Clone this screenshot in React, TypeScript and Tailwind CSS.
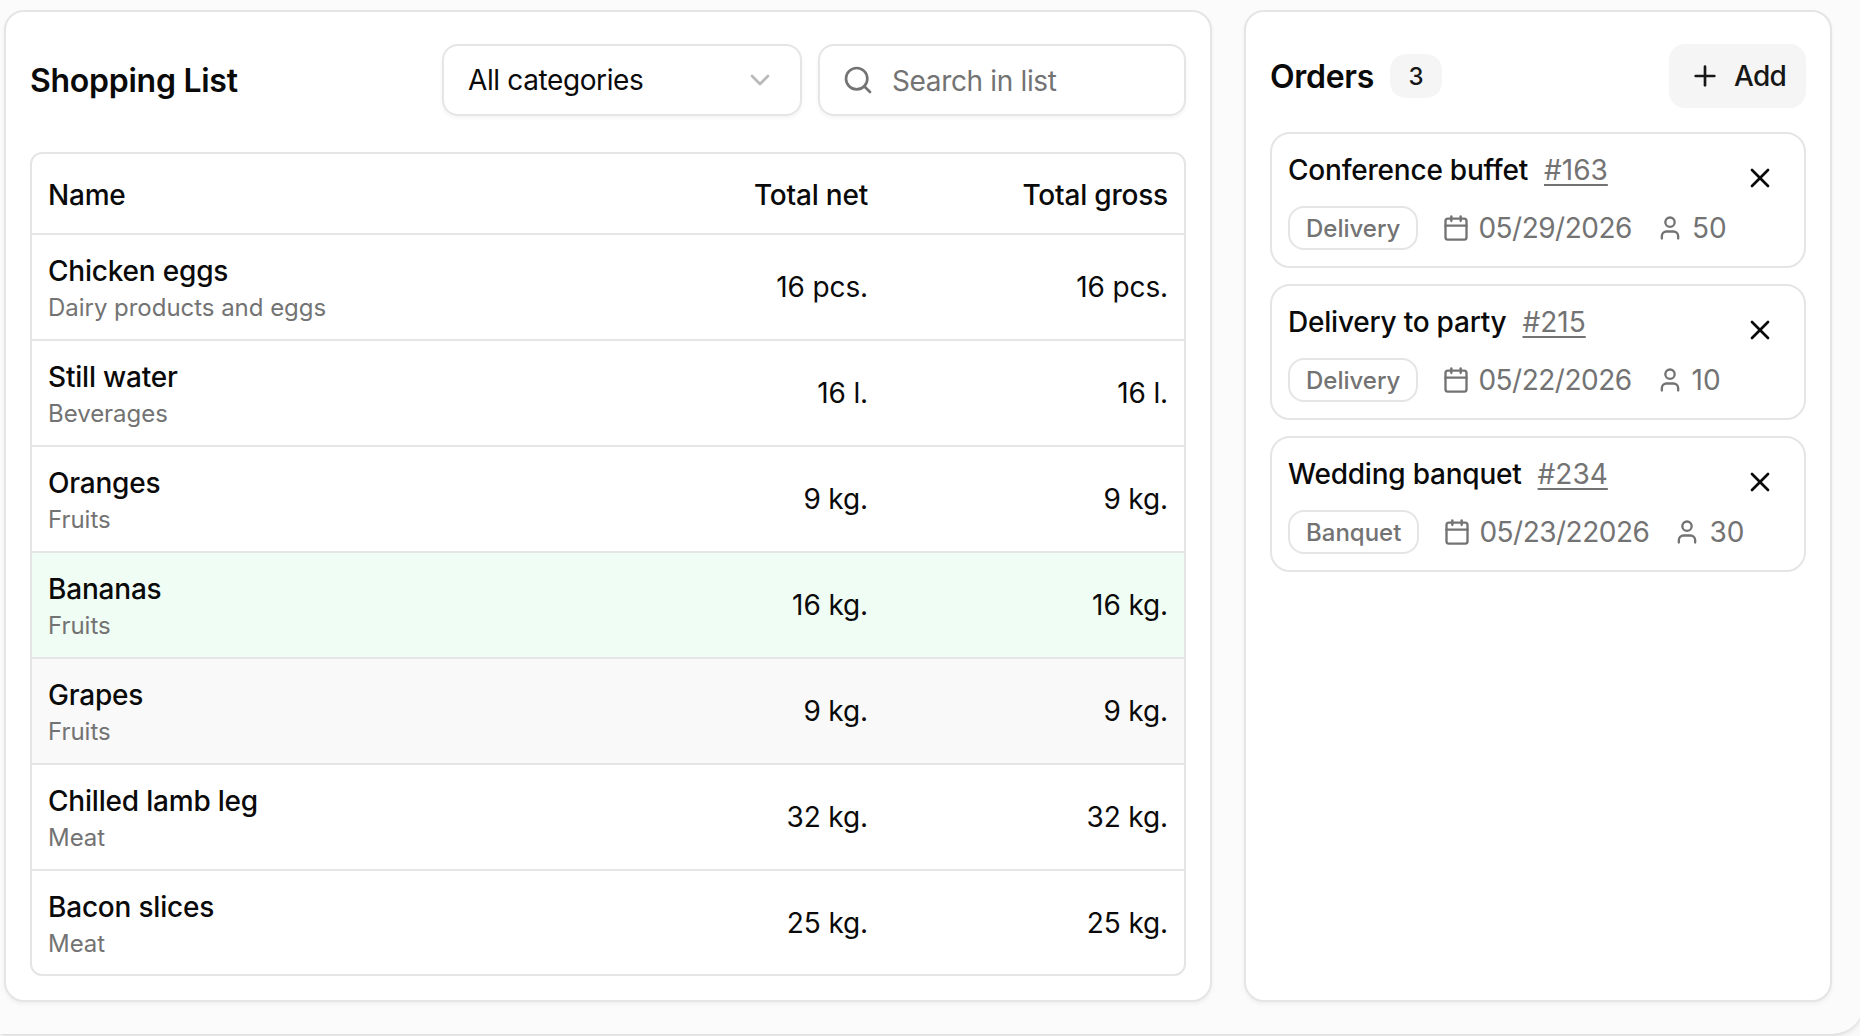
import { Calendar, ChevronDown, Plus, Search, User, X } from "lucide-react";

const products = [
  { name: "Chicken eggs", category: "Dairy products and eggs", net: "16 pcs.", gross: "16 pcs." },
  { name: "Still water", category: "Beverages", net: "16 l.", gross: "16 l." },
  { name: "Oranges", category: "Fruits", net: "9 kg.", gross: "9 kg." },
  { name: "Bananas", category: "Fruits", net: "16 kg.", gross: "16 kg.", className: "bg-[#f0fdf4]" },
  { name: "Grapes", category: "Fruits", net: "9 kg.", gross: "9 kg.", className: "bg-[#f9f9f9]" },
  { name: "Chilled lamb leg", category: "Meat", net: "32 kg.", gross: "32 kg." },
  { name: "Bacon slices", category: "Meat", net: "25 kg.", gross: "25 kg." },
];

const orders = [
  { title: "Conference buffet", id: "#163", type: "Delivery", date: "05/29/2026", guests: 50 },
  { title: "Delivery to party", id: "#215", type: "Delivery", date: "05/22/2026", guests: 10 },
  { title: "Wedding banquet", id: "#234", type: "Banquet", date: "05/23/22026", guests: 30 },
];

function ShoppingList() {
  return (
    <section className="flex h-[992px] w-[1208px] shrink-0 flex-col rounded-[20px] border-2 border-[#e5e5e5] bg-white px-6 pt-8 shadow-[0_2px_4px_rgba(0,0,0,0.05)]">
      <div className="flex items-center">
        <h2 className="flex-1 pt-0.5 text-[32px] leading-10 font-semibold tracking-[-0.27px]">Shopping List</h2>
        <button className="flex h-[72px] w-[360px] items-center justify-between rounded-2xl border-2 border-[#e5e5e5] px-6 shadow-[0_2px_4px_rgba(0,0,0,0.05)]">
          <span className="tracking-[-0.38px]">All categories</span>
          <ChevronDown size={32} className="text-[#b9b9b9]" />
        </button>
        <label className="ml-4 flex h-[72px] w-[368px] items-center gap-[18px] rounded-2xl border-2 border-[#e5e5e5] px-[22px] text-[#737373] shadow-[0_2px_4px_rgba(0,0,0,0.05)]">
          <Search size={32} />
          <span className="pt-0.5 tracking-[-0.35px]">Search in list</span>
        </label>
      </div>

      {/* Table */}
      <div className="mt-9 h-[824px] overflow-hidden rounded-xl border-2 border-[#e5e5e5]">
        <div className="flex h-[81px] items-center border-b-2 border-[#e5e5e5] px-4 pt-0.5 font-medium tracking-[-0.2px]">
          <div className="flex-1">Name</div>
          <div className="w-[300px] text-right">Total net</div>
          <div className="w-[300px] text-right">Total gross</div>
        </div>
        {products.map((p) => (
          <div
            key={p.name}
            className={`flex h-[106px] items-center border-b-2 border-[#e5e5e5] px-4 tracking-[-0.12px] ${p.className ?? ""}`}
          >
            <div className="flex-1 pt-[5px]">
              <div className="leading-9 font-medium tracking-[-0.2px]">{p.name}</div>
              <div className="pt-px text-2xl leading-9 tracking-[-0.03px] text-[#737373]">{p.category}</div>
            </div>
            <div className="w-[300px] text-right">{p.net}</div>
            <div className="w-[300px] text-right">{p.gross}</div>
          </div>
        ))}
      </div>
    </section>
  );
}

function Orders() {
  return (
    <section className="h-[992px] w-[588px] shrink-0 rounded-[20px] border-2 border-[#e5e5e5] bg-white px-6 pt-8 shadow-[0_2px_4px_rgba(0,0,0,0.05)]">
      <div className="flex items-center">
        <h2 className="pt-0.5 text-[32px] leading-10 font-semibold tracking-[-0.3px]">Orders</h2>
        <span className="ml-4 flex h-11 w-[52px] items-center justify-center rounded-2xl bg-[#f5f5f5] pt-0.5 text-2xl font-medium text-[#171717]">
          3
        </span>
        <button className="ml-auto flex h-16 w-[137px] items-center gap-[13px] rounded-2xl bg-[#f5f5f5] pl-5 font-medium tracking-[-0.7px] text-[#171717]">
          <Plus size={32} className="shrink-0" />
          Add
        </button>
      </div>

      {/* Order cards */}
      <div className="mt-6 flex flex-col gap-4">
        {orders.map((o) => (
          <div key={o.id} className="flex h-[136px] rounded-[20px] border-2 border-[#e5e5e5] pt-4 pl-4">
            <div className="min-w-0 flex-1">
              <div className="flex h-10 items-center gap-4">
                <span className="font-medium tracking-[-0.22px]">{o.title}</span>
                <a className="text-[#737373] underline decoration-2 underline-offset-4">{o.id}</a>
              </div>
              <div className="mt-4 flex h-11 items-center text-[#737373]">
                <span className="flex h-11 items-center rounded-2xl border-2 border-[#e5e5e5] px-4 pt-0.5 text-2xl font-medium">
                  {o.type}
                </span>
                <Calendar size={28} className="ml-6 shrink-0" />
                <span className="ml-2 tracking-[-0.5px]">{o.date}</span>
                <User size={28} className="ml-6 shrink-0" />
                <span className="ml-2">{o.guests}</span>
              </div>
            </div>
            <button className="mt-3 mr-7 h-8 shrink-0">
              <X size={32} />
            </button>
          </div>
        ))}
      </div>
    </section>
  );
}

export default function App() {
  return (
    <div className="h-[1036px] w-[1860px] overflow-hidden bg-[#fafafa] font-['Inter',sans-serif] text-[28px] leading-10 whitespace-nowrap text-[#0a0a0a]">
      <div className="flex h-[1034px] w-[1864px] gap-8 rounded-br-[32px] bg-[#fbfbfb] pt-2.5 pl-1 shadow-[0_2px_6px_rgba(0,0,0,0.1),0_2px_4px_-2px_rgba(0,0,0,0.1)]">
        <ShoppingList />
        <Orders />
      </div>
    </div>
  );
}
